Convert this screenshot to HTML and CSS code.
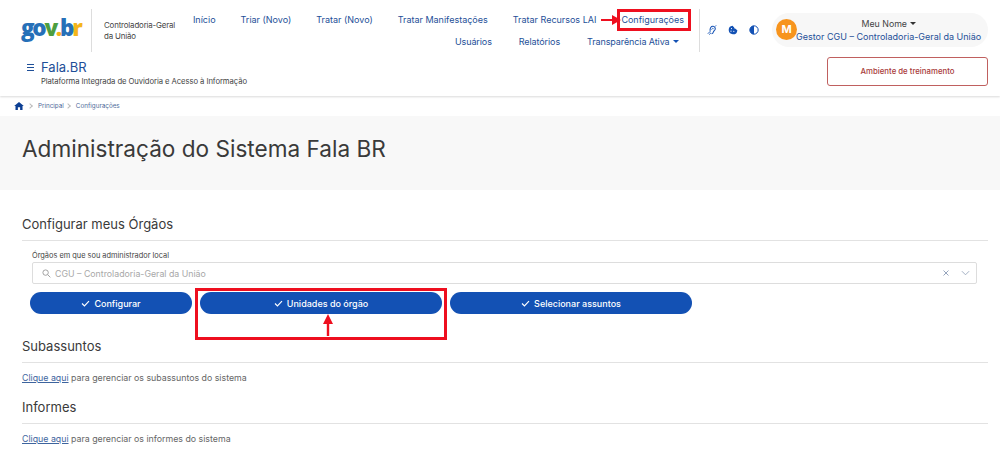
FILE: index.html
```html
<!DOCTYPE html>
<html lang="pt-BR">
<head>
<meta charset="utf-8">
<title>Fala.BR</title>
<link rel="stylesheet" href="styles.css">
</head>
<body>
<header class="header">
  <div class="header-top">
    <div class="logo"><span class="l-g">g</span><span class="l-o">o</span><span class="l-v">v</span><span class="l-d">.</span><span class="l-b">b</span><span class="l-r">r</span></div>
    <div class="org">Controladoria-Geral<br>da União</div>
    <nav class="nav">
      <div class="nav-row">
        <a>Início</a><a>Triar (Novo)</a><a>Tratar (Novo)</a><a>Tratar Manifestações</a><a>Tratar Recursos LAI</a><a>Configurações</a>
      </div>
      <div class="nav-row nav-row-second">
        <a>Usuários</a><a>Relatórios</a><a>Transparência Ativa <span class="caret"></span></a>
      </div>
    </nav>
    <div class="tools">
      <svg class="tool" viewBox="0 0 12 12"><path d="M3.800 7C3.200 3.600 5 1.400 7.300 1.600c2.100.2 3.100 2 2.400 3.900-.5 1.200-1.600 1.500-1.900 2.600-.3 1.300-1 2.300-2.300 2.200" fill="none" stroke="#1351b4" stroke-width="1.300"/><path d="M5.600 5.600c0-1.500 1.800-2.200 2.400-1" fill="none" stroke="#1351b4" stroke-width="1"/><path d="M1 10.500l3.200-3.200M2.600 11.500l2.200-2.200M10 1.400L11.300.4" stroke="#1351b4" stroke-width="1.100"/></svg>
      <svg class="tool" viewBox="0 0 12 12"><path d="M5.500.8a5.200 5.200 0 1 0 5.700 5.700c-.3-.8-1-1-1.500-1-.4-1.100-1.300-1.400-2-1.300C7.800 3 7 2.300 6.500 2.400 6.500 1.500 6 .9 5.500.8z" fill="#1351b4"/><circle cx="4.200" cy="4.300" r=".7" fill="#fff"/><circle cx="3.600" cy="7.400" r=".7" fill="#fff"/><circle cx="7" cy="7.600" r=".7" fill="#fff"/></svg>
      <svg class="tool" viewBox="0 0 12 12"><circle cx="6" cy="6" r="5" fill="#fff" stroke="#1351b4" stroke-width="1.200"/><path d="M6 1a5 5 0 0 0 0 10z" fill="#1351b4"/></svg>
    </div>
    <div class="user">
      <div class="avatar">M</div>
      <div class="user-text">
        <div class="user-name">Meu Nome <span class="caret dark"></span></div>
        <div class="user-role">Gestor CGU – Controladoria-Geral da União</div>
      </div>
    </div>
  </div>
  <div class="header-bottom">
    <div class="system">
      <div class="system-title"><span class="burger"><i></i><i></i><i></i></span>Fala.BR</div>
      <div class="system-sub">Plataforma Integrada de Ouvidoria e Acesso à Informação</div>
    </div>
    <div class="training">Ambiente de treinamento</div>
  </div>
</header>
<div class="crumbs">
  <svg class="home" viewBox="0 0 12 10"><path d="M6 0L0 5h1.600v5h3V6.700h2.800V10h3V5H12z" fill="#0c3f94"/></svg>
  <span class="sep"></span><span>Principal</span><span class="sep"></span><span>Configurações</span>
</div>
<section class="hero"><h1>Administração do Sistema Fala BR</h1></section>
<main class="main">
  <h2 class="first">Configurar meus Órgãos</h2>
  <div class="config">
    <label class="field-label">Órgãos em que sou administrador local</label>
    <div class="select">
      <svg class="search" viewBox="0 0 10 10"><circle cx="4" cy="4" r="3" fill="none" stroke="#999" stroke-width="1"/><path d="M6.300 6.300L9.300 9.300" stroke="#999" stroke-width="1"/></svg>
      <span class="select-value">CGU – Controladoria-Geral da União</span>
      <svg class="x" viewBox="0 0 6 6"><path d="M.5.500l5 5M5.500.500l-5 5" stroke="#8a9bb5" stroke-width=".9"/></svg>
      <svg class="chev" viewBox="0 0 10 6"><path d="M1 1l4 4 4-4" fill="none" stroke="#9aa8bd" stroke-width="1"/></svg>
    </div>
    <div class="buttons">
      <button class="btn b1"><svg viewBox="0 0 10 8"><path d="M1 4l2.800 2.800L9 1.200" fill="none" stroke="#fff" stroke-width="1.300"/></svg>Configurar</button>
      <button class="btn b2"><svg viewBox="0 0 10 8"><path d="M1 4l2.800 2.800L9 1.200" fill="none" stroke="#fff" stroke-width="1.300"/></svg>Unidades do órgão</button>
      <button class="btn b3"><svg viewBox="0 0 10 8"><path d="M1 4l2.800 2.800L9 1.200" fill="none" stroke="#fff" stroke-width="1.300"/></svg>Selecionar assuntos</button>
    </div>
  </div>
  <h2 class="sub">Subassuntos</h2>
  <p><a>Clique aqui</a> para gerenciar os subassuntos do sistema</p>
  <h2 class="inf">Informes</h2>
  <p><a>Clique aqui</a> para gerenciar os informes do sistema</p>
</main>
<div class="mark mark-config"></div>
<div class="mark mark-unit"></div>
<svg class="arrow arrow-right" viewBox="0 0 20 10"><path d="M0 4h11V0l9 5-9 5V6H0z" fill="#ee0f1f"/></svg>
<svg class="arrow arrow-up" viewBox="0 0 10 22"><path d="M5 0l5 10H6.200v12H3.800V10H0z" fill="#ee0f1f"/></svg>
</body>
</html>
```
FILE: styles.css
```css
* { box-sizing: border-box; }
html, body { margin: 0; padding: 0; }
body { width: 1000px; height: 470px; overflow: hidden; position: relative; background: #fff; font-family: Inter, "Open Sans", sans-serif; color: #333; }
.header { height: 96px; box-shadow: 0 1px 2px rgba(0,0,0,.15); position: relative; }
.header-top { display: flex; height: 57px; padding-top: 9px; }
.logo { width: 71px; margin-left: 21px; height: 43px; border-right: 1px solid #ddd; font-family: "Open Sans", sans-serif; font-weight: 800; font-size: 22.500px; letter-spacing: -2.300px; line-height: 38px; }
.l-g { color: #2670b8; } .l-o { color: #2670b8; } .l-v { color: #4d9e3f; } .l-d { color: #f4b51a; } .l-b { color: #2670b8; } .l-r { color: #f4b51a; }
.org { width: 89px; margin-left: 12px; padding-top: 11px; font-size: 7.900px; line-height: 11px; color: #444; letter-spacing: -.02em; }
.nav { width: 491px; padding-top: 5px; margin-right: 15px; }
.nav-row { display: flex; justify-content: flex-end; gap: 25px; height: 22px; font-size: 9px; line-height: 12px; color: #1e4f98; white-space: nowrap; }
.nav-row-second { gap: 27px; padding-right: 5px; letter-spacing: -.1px; }
.caret { display: inline-block; width: 0; height: 0; border: 3.200px solid transparent; border-top: 3.500px solid #1351b4; border-bottom: 0; vertical-align: 2px; margin-left: 1px; }
.caret.dark { border-top-color: #333; }
.tools { width: 73px; height: 43px; border-left: 1px solid #ddd; display: flex; align-items: flex-start; padding: 16px 0 0 7px; gap: 11px; }
.tool { width: 10px; height: 10px; flex: none; }
.user { width: 216px; height: 34px; margin-top: 4px; background: #f7f7f7; border-radius: 17px; display: flex; position: relative; padding-left: 4px; }
.avatar { width: 21px; height: 21px; margin-top: 6px; border-radius: 50%; background: #f7941d; color: #fff; font-weight: 700; font-size: 11px; line-height: 21px; text-align: center; flex: none; }
.user-text { width: 186px; margin-left: -3px; text-align: center; }
.user-name { font-size: 8.800px; line-height: 12px; margin-top: 5px; padding-left: 4px; color: #444; }
.user-role { font-size: 9px; line-height: 13px; color: #1e4f98; white-space: nowrap; padding-left: 2px; }
.header-bottom { display: flex; justify-content: space-between; padding: 0 12px 0 27px; }
.system-title { font-size: 13px; line-height: 18px; color: #1e4f98; margin-top: 1px; display: flex; align-items: center; }
.burger { display: flex; flex-direction: column; gap: 2px; width: 14px; }
.burger i { display: block; width: 7px; height: 1px; background: #1e4f98; }
.system-sub { font-size: 7.700px; line-height: 10px; margin: 1px 0 0 14px; color: #444; letter-spacing: -.01em; }
.training { width: 161px; height: 29px; border: 1px solid #c0605f; border-radius: 3px; color: #a83a3a; font-size: 7.800px; font-weight: 500; text-align: center; line-height: 27px; }
.crumbs { height: 20px; display: flex; align-items: center; padding-left: 14px; font-size: 6.300px; color: #4d6a99; }
.home { width: 10px; height: 8px; margin-right: 2px; }
.sep { width: 4px; height: 4px; border-top: 1px solid #bbb; border-right: 1px solid #bbb; transform: rotate(45deg); margin: 0 6px 0 2px; }
.hero { height: 74px; background: #f8f8f8; padding: 19px 0 0 22px; }
h1 { margin: 0; font-size: 22.600px; line-height: 28px; font-weight: 400; color: #3a3a3a; }
.main { padding: 0 0 0 22px; }
h2 { margin: 0; width: 966px; border-bottom: 1px solid #e2e2e2; font-size: 13px; line-height: 18px; font-weight: 400; color: #3a3a3a; }
h2.first { margin-top: 25px; height: 26px; }
.config { padding-top: 9px; height: 96px; }
.field-label { display: block; font-size: 7.400px; line-height: 11px; margin-left: 10px; color: #444; }
.select { margin: 1px 0 0 10px; width: 945px; height: 22px; border: 1px solid #ddd; border-radius: 2px; display: flex; align-items: center; padding-left: 9px; }
.search { width: 9px; height: 9px; margin-right: 4px; }
.select-value { flex: 1; font-size: 8.800px; color: #a8a8a8; }
.x { width: 6px; height: 6px; margin-right: 12px; }
.chev { width: 9px; height: 6px; margin-right: 6px; }
.buttons { display: flex; gap: 8px; margin: 8px 0 0 8px; }
.btn { height: 22px; border: 0; border-radius: 11px; background: #1351b4; color: #fff; font: 500 9px Inter, sans-serif; display: flex; align-items: center; justify-content: center; padding: 0; }
.btn svg { width: 9px; height: 7px; margin-right: 4px; }
.b1 { width: 162px; } .b2 { width: 242px; } .b3 { width: 242px; }
.sub, .inf { height: 26px; }
.inf { margin-top: 9px; }
.main p { margin: 0; height: 26px; padding-top: 9px; font-size: 8.800px; line-height: 12px; color: #666; }
.main p a { color: #3d649e; text-decoration: underline; }
.mark { position: absolute; border: 3px solid #ee0f1f; }
.mark-config { left: 617px; top: 9px; width: 74px; height: 22px; }
.mark-unit { left: 195px; top: 288px; width: 252px; height: 52px; }
.arrow { position: absolute; }
.arrow-right { left: 601px; top: 15px; width: 20px; height: 10px; }
.arrow-up { left: 323px; top: 314px; width: 10px; height: 22px; }
```
